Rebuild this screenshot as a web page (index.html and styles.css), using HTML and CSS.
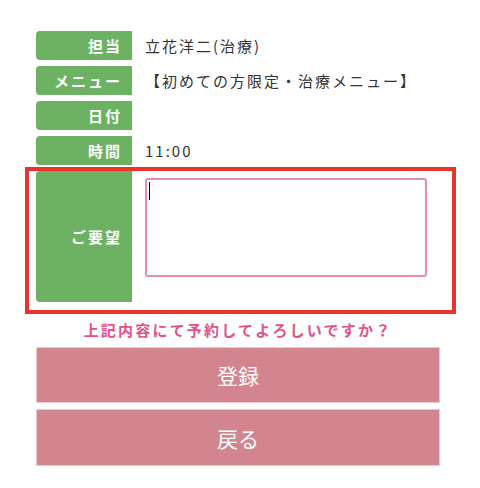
FILE: index.html
```html
<!DOCTYPE html>
<html lang="ja">
<head>
<meta charset="UTF-8" />
<meta name="viewport" content="width=device-width, initial-scale=1" />
<title>予約確認</title>
<link rel="stylesheet" href="styles.css">
</head>
<body>
<main class="confirm">
  <div class="row">
    <div class="label">担当</div>
    <div class="value">立花洋二(治療)</div>
  </div>
  <div class="row">
    <div class="label">メニュー</div>
    <div class="value">【初めての方限定・治療メニュー】</div>
  </div>
  <div class="row">
    <div class="label">日付</div>
    <div class="value"></div>
  </div>
  <div class="row">
    <div class="label">時間</div>
    <div class="value">11:00</div>
  </div>
  <div class="row row-request">
    <div class="label">ご要望</div>
    <div class="value">
      <textarea class="request" autofocus></textarea>
      <span class="caret"></span>
    </div>
  </div>
  <!-- highlight frame around the request row -->
  <div class="highlight"></div>

  <p class="question">上記内容にて予約してよろしいですか？</p>
  <button class="btn" type="button">登録</button>
  <button class="btn" type="button">戻る</button>
</main>
</body>
</html>
```

FILE: styles.css
```css
body {
  margin: 0;
  background: #fff;
  color: #333;
  font-family: "Noto Sans CJK JP", "Noto Sans", sans-serif;
}

.confirm {
  position: relative;
  width: 404px;
  margin-left: 36px;
  padding-top: 31px;
  display: flex;
  flex-direction: column;
  gap: 6px;
}

.row {
  display: flex;
  height: 29px;
}
.label {
  width: 96px;
  flex-shrink: 0;
  box-sizing: border-box;
  padding-right: 10px;
  display: flex;
  align-items: center;
  justify-content: flex-end;
  background: #6cb262;
  color: #fff;
  font-size: 15px;
  font-weight: bold;
  letter-spacing: 2px;
  border-radius: 4px 0 0 4px;
}
.value {
  flex: 1;
  padding-left: 13px;
  display: flex;
  align-items: center;
  font-size: 15px;
  letter-spacing: 2px;
  line-height: 1;
}

/* request row */
.row-request {
  height: 131px;
}
.row-request .value {
  position: relative;
  align-items: flex-start;
  padding-top: 7px;
  padding-right: 13px;
}
.request {
  display: block;
  width: 100%;
  height: 99px;
  box-sizing: border-box;
  margin: 0;
  padding: 2px 2px;
  border: 2px solid #e98ab4;
  border-radius: 3px;
  outline: none;
  resize: none;
  font-family: inherit;
  font-size: 15px;
  caret-color: transparent;
}
.caret {
  position: absolute;
  left: 17px;
  top: 11px;
  width: 1px;
  height: 18px;
  background: #000;
}

.highlight {
  position: absolute;
  left: -11px;
  top: 167px;
  width: 423px;
  height: 139px;
  border: 4px solid #e8342a;
  pointer-events: none;
}

.question {
  margin: 11px 0 0;
  text-align: center;
  color: #e0528b;
  font-size: 15px;
  font-weight: bold;
  letter-spacing: 2.2px;
  line-height: 22px;
}

.btn {
  display: block;
  width: 100%;
  height: 56px;
  margin: 0;
  border: 1px solid #efc9ce;
  background: #d3858f;
  color: #fff;
  font-family: inherit;
  font-size: 21px;
  cursor: pointer;
}
.btn + .btn {
  height: 57px;
}
```
